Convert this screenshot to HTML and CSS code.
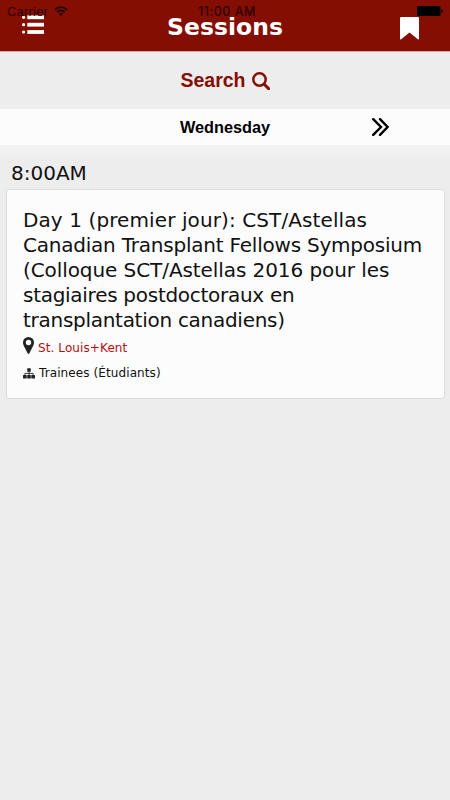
FILE: index.html
```
<!DOCTYPE html>
<html lang="en">
<head>
  <meta charset="UTF-8">
  <meta name="viewport" content="width=device-width, initial-scale=1.0">
  <title>Sessions</title>
  <link rel="stylesheet" href="styles.css">
</head>
<body>

<!-- Phone status bar, sits over the header -->
<div class="status-bar">
  <div class="carrier">
    <span>Carrier</span>
    <svg class="wifi" viewBox="0 0 14 10">
      <path d="M1 3.7 Q7 -1.5 13 3.7 M3.2 6 Q7 2.8 10.8 6" fill="none" stroke="#160000" stroke-width="1.7"/>
      <path d="M4.8 7.5 Q7 5.8 9.2 7.5 L7 9.8 Z" fill="#160000"/>
    </svg>
  </div>
  <span class="clock">11:00 AM</span>
  <svg class="battery" viewBox="0 0 26 10">
    <rect width="23.5" height="10" rx="1" fill="#000"/>
    <path d="M24.3 3.3 Q26 3.6 26 5 Q26 6.4 24.3 6.7 Z" fill="#160000"/>
  </svg>
</div>

<header>
  <svg class="menu-icon" viewBox="0 0 22 20">
    <g fill="#fff">
      <circle cx="1.6" cy="2.3" r="1.6"/>
      <circle cx="1.6" cy="9.7" r="1.6"/>
      <circle cx="1.6" cy="17" r="1.6"/>
      <rect x="5.3" y="0.4" width="16.7" height="3.8"/>
      <rect x="5.3" y="7.8" width="16.7" height="3.8"/>
      <rect x="5.3" y="15.1" width="16.7" height="3.8"/>
    </g>
  </svg>
  <h1>Sessions</h1>
  <svg class="bookmark-icon" viewBox="0 0 19 23">
    <path d="M1.2 0 H17.8 Q19 0 19 1.2 V21.8 Q19 23 17.8 22.3 L9.5 15.5 L1.2 22.3 Q0 23 0 21.8 V1.2 Q0 0 1.2 0 Z" fill="#fff"/>
  </svg>
</header>

<div class="search">
  <span>Search</span>
  <svg class="search-icon" viewBox="0 0 18 18">
    <circle cx="7.5" cy="7.5" r="6.2" fill="none" stroke="#840e02" stroke-width="2.5"/>
    <path d="M12.2 12.2 L16.6 16.6" stroke="#840e02" stroke-width="2.9" stroke-linecap="round"/>
  </svg>
</div>

<div class="day-bar">
  <span>Wednesday</span>
  <svg class="next-icon" viewBox="0 0 17 18">
    <path d="M1.2 1.2 L9 9 L1.2 16.8 M8 1.2 L15.6 9 L8 16.8" fill="none" stroke="#000" stroke-width="2.4" stroke-linecap="round"/>
  </svg>
</div>

<main>
  <h2>8:00AM</h2>
  <div class="card">
    <h3>
      <span class="wide">Day 1 (premier jour): CST/Astellas</span>
      <span class="snug">Canadian Transplant Fellows Symposium</span>
      <span class="normal">(Colloque SCT/Astellas 2016 pour les</span>
      <span class="tight">stagiaires postdoctoraux en</span>
      <span class="tight">transplantation canadiens)</span>
    </h3>
    <div class="info location">
      <svg class="pin-icon" viewBox="0 0 11 17">
        <path fill-rule="evenodd" d="M5.5 0 A5.5 5.5 0 0 1 11 5.5 Q11 7.2 10.2 8.7 L6.4 16.2 Q5.5 17.6 4.6 16.2 L0.8 8.7 Q0 7.2 0 5.5 A5.5 5.5 0 0 1 5.5 0 Z M5.5 2.8 A2.7 2.7 0 1 0 5.5 8.2 A2.7 2.7 0 1 0 5.5 2.8 Z" fill="#222"/>
      </svg>
      <span>St. Louis+Kent</span>
    </div>
    <div class="info group">
      <svg class="group-icon" viewBox="0 0 12 11">
        <g fill="#222">
          <rect x="4.2" y="0.3" width="3.6" height="3.5" rx="0.5"/>
          <rect x="0" y="7" width="3.7" height="3.5" rx="0.5"/>
          <rect x="4.2" y="7" width="3.6" height="3.5" rx="0.5"/>
          <rect x="8.3" y="7" width="3.7" height="3.5" rx="0.5"/>
        </g>
        <path d="M6 3.5 V7 M1.9 7.2 V5.4 H10.1 V7.2" fill="none" stroke="#222" stroke-width="0.9"/>
      </svg>
      <span>Trainees (Étudiants)</span>
    </div>
  </div>
</main>

</body>
</html>
```
FILE: styles.css
```
body {
  font-family: "DejaVu Sans", Verdana, sans-serif;
  margin: 0;
  background: #ededed;
  color: #111;
}

h1, h2, h3 {
  margin: 0;
  font-weight: normal;
}

svg {
  display: block;
  flex: none;
}

.status-bar {
  position: absolute;
  top: 0;
  left: 0;
  right: 0;
  height: 23px;
  padding: 0 7px;
  box-sizing: border-box;
  display: grid;
  grid-template-columns: 1fr auto 1fr;
  align-items: center;
  font-family: "Liberation Sans", Arial, sans-serif;
  font-size: 13px;
  line-height: 11px;
  color: #2b0000;
}

.carrier {
  display: flex;
  align-items: center;
  gap: 6px;
  letter-spacing: 0.2px;
}

.wifi {
  width: 14px;
  height: 10px;
  margin-top: -2px;
}

.clock {
  margin-left: 4px;
  font-family: Inter, "Liberation Sans", sans-serif;
  font-size: 12.5px;
  font-weight: 500;
  letter-spacing: 0.5px;
}

.battery {
  width: 26px;
  height: 10px;
  margin-top: -1px;
  justify-self: end;
}

header {
  display: grid;
  grid-template-columns: 1fr auto 1fr;
  align-items: start;
  height: 51px;
  padding: 0 31px 0 22px;
  box-sizing: border-box;
  background: #840e02;
  box-shadow: 0 1px 0 #dba8a3;
}

.menu-icon {
  width: 22px;
  height: 20px;
  margin-top: 15px;
}

h1 {
  margin: 17px 0 0 9px;
  font-size: 23.5px;
  line-height: 20px;
  font-weight: bold;
  color: #fff;
}

.bookmark-icon {
  width: 19px;
  height: 23px;
  margin-top: 17px;
  justify-self: end;
}

.search {
  display: flex;
  align-items: center;
  justify-content: center;
  gap: 6px;
  height: 58px;
  font: bold 19.5px "Liberation Sans", Arial, sans-serif;
  color: #840e02;
}

.search-icon {
  width: 18px;
  height: 18px;
  margin-top: 2px;
}

.day-bar {
  display: grid;
  grid-template-columns: 1fr auto 1fr;
  align-items: center;
  height: 36px;
  background: #fcfcfc;
  font: bold 16.3px "Liberation Sans", Arial, sans-serif;
  color: #000;
}

.day-bar span {
  grid-column: 2;
}

.next-icon {
  width: 17px;
  height: 18px;
  margin: -1px 0 0 102px;
}

main {
  padding: 14px 5px 0 6px;
  background: linear-gradient(#f3f3f3, #ededed 15px);
}

h2 {
  padding-left: 5px;
  font-size: 20px;
  line-height: 28px;
}

.card {
  height: 210px;
  margin-top: 2px;
  padding: 18px 16px 0;
  box-sizing: border-box;
  background: #fcfcfc;
  border: 1px solid #dcdcdc;
  border-radius: 3px;
}

h3 {
  font-size: 20px;
  line-height: 25px;
  white-space: nowrap;
}

h3 span {
  display: block;
}

/* Tracking of the title lines */
.wide {
  letter-spacing: 0.1px;
}

.snug {
  letter-spacing: -0.22px;
}

.normal {
  letter-spacing: -0.08px;
}

.tight {
  letter-spacing: -0.28px;
}

.info {
  display: flex;
  align-items: center;
  gap: 4px;
  height: 25px;
  font-size: 12px;
  letter-spacing: 0.1px;
}

.info span {
  margin-top: 5px;
}

.location {
  color: #b80d0d;
}

.pin-icon {
  width: 11px;
  height: 17px;
}

.group-icon {
  width: 12px;
  height: 11px;
  margin-top: 5px;
}
```
